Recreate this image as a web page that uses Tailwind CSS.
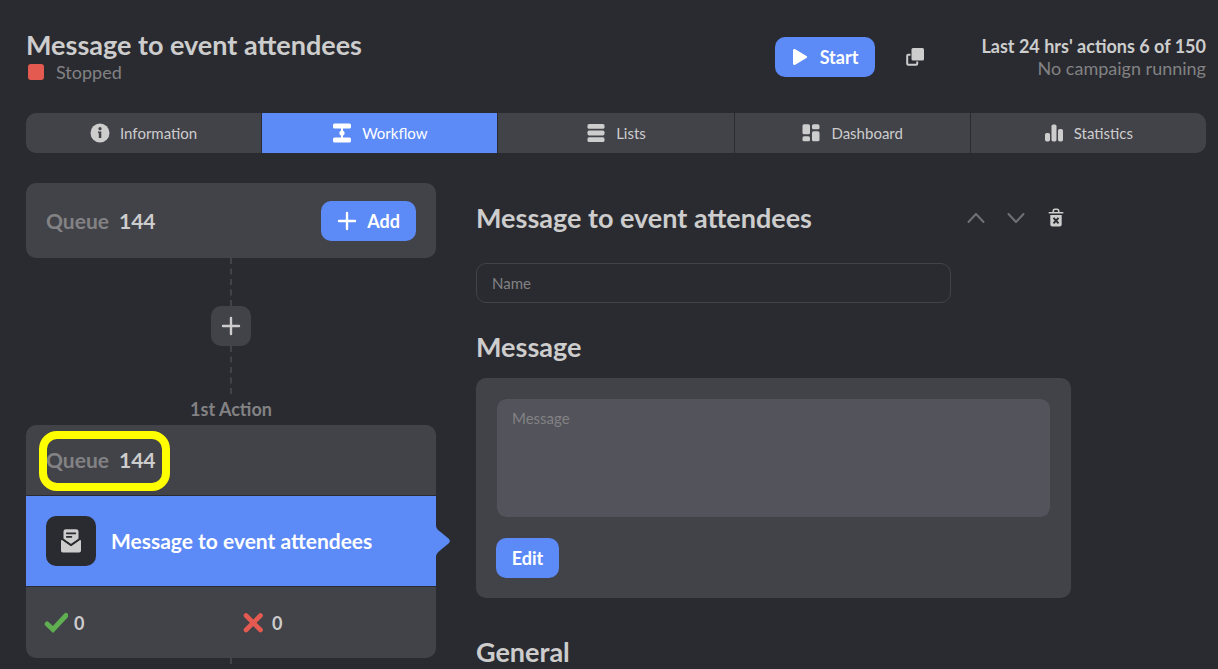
<!DOCTYPE html>
<html lang="en">
<head>
  <meta charset="UTF-8" />
  <meta name="viewport" content="width=device-width, initial-scale=1.0"/>
  <title>Message to event attendees</title>
  <script src="https://cdn.jsdelivr.net/npm/@tailwindcss/browser@4"></script>
</head>
<body class="bg-[#2a2b30] text-[#cdcdcd] font-['Lato',sans-serif] min-h-screen pl-[26px] pr-3 pt-[30px]">

  <!-- Campaign header -->
  <header class="flex items-center">
    <div class="flex-1">
      <h1 class="text-[27px] leading-[30px] font-bold">Message to event attendees</h1>
      <p class="flex items-center gap-3 pl-0.5 text-lg leading-6 text-[#828284]">
        <span class="w-4 h-4 rounded-[3px] bg-[#e55a50]"></span>
        Stopped
      </p>
    </div>
    <button class="flex items-center justify-center gap-3 w-[100px] h-10 rounded-[10px] bg-[#5c8af7] text-white text-lg font-bold">
      <svg class="w-4 h-4" viewBox="0 0 16 16" fill="currentColor"><path d="M1 1.6C1 .4 2.200-.3 3.200.3L14.500 7c.9.5.9 1.500 0 2L3.200 15.700C2.200 16.300 1 15.600 1 14.400z"/></svg>
      Start
    </button>
    <button aria-label="Duplicate" class="flex items-center justify-center w-10 h-10 ml-5 mr-10">
      <svg class="w-[18px] h-[18px]" viewBox="0 0 18 18"><path d="M4.500 6.800H2.200a1 1 0 0 0-1 1V15.800a1 1 0 0 0 1 1H10.200a1 1 0 0 0 1-1V13.500" fill="none" stroke="currentColor" stroke-width="2"/><rect x="5.500" y="0" width="12.500" height="12.500" rx="1.500" fill="currentColor"/></svg>
    </button>
    <div class="w-[231px] text-right text-lg leading-[22px] whitespace-nowrap">
      <p class="font-bold">Last 24 hrs' actions 6 of 150</p>
      <p class="text-[#828284]">No campaign running</p>
    </div>
  </header>

  <!-- Tabs -->
  <nav class="mt-[29px] grid grid-cols-5 gap-px h-10 rounded-[10px] overflow-hidden text-[15px]">
    <a href="#information" class="flex items-center justify-center gap-2.5 bg-[#424249]">
      <svg class="w-5 h-5" viewBox="0 0 20 20"><circle cx="10" cy="10" r="9.500" fill="currentColor"/><circle cx="10" cy="5.700" r="1.600" fill="#424249"/><path d="M8 8.500h3.300V15H8.800V10H8z" fill="#424249"/></svg>
      Information
    </a>
    <a href="#workflow" class="flex items-center justify-center gap-2.5 bg-[#5c8af7] text-white">
      <svg class="w-5 h-5" viewBox="0 0 20 20" fill="currentColor"><rect x="1" y="0.500" width="18" height="5" rx="1.600"/><rect x="1" y="14.500" width="18" height="5" rx="1.600"/><rect x="9" y="4" width="2" height="12"/><circle cx="10" cy="10" r="2.600"/></svg>
      Workflow
    </a>
    <a href="#lists" class="flex items-center justify-center gap-2.5 bg-[#424249]">
      <svg class="w-5 h-5" viewBox="0 0 20 20" fill="currentColor"><rect x="1.500" y="1" width="17" height="4.800" rx="1.600"/><rect x="1.500" y="7.600" width="17" height="4.800" rx="1.600"/><rect x="1.500" y="14.200" width="17" height="4.800" rx="1.600"/></svg>
      Lists
    </a>
    <a href="#dashboard" class="flex items-center justify-center gap-2.5 bg-[#424249]">
      <svg class="w-5 h-5" viewBox="0 0 20 20" fill="currentColor"><rect x="1.500" y="1.300" width="7.500" height="10" rx="1.600"/><rect x="1.500" y="13.300" width="7.500" height="5" rx="1.600"/><rect x="11" y="1.300" width="7.500" height="5" rx="1.600"/><rect x="11" y="8.300" width="7.500" height="10" rx="1.600"/></svg>
      Dashboard
    </a>
    <a href="#statistics" class="flex items-center justify-center gap-2.5 bg-[#424249]">
      <svg class="w-5 h-5" viewBox="0 0 20 20" fill="currentColor"><rect x="1" y="10" width="5" height="8.500" rx="1.700"/><rect x="7.500" y="1.500" width="5" height="17" rx="1.700"/><rect x="14" y="6" width="5" height="12.500" rx="1.700"/></svg>
      Statistics
    </a>
  </nav>

  <main class="mt-[30px] flex items-start gap-10">

    <!-- Workflow column -->
    <section class="w-[410px] shrink-0 flex flex-col items-center">
      <div class="w-full h-[75px] rounded-[10px] bg-[#424249] px-5 flex items-center justify-between">
        <p class="flex gap-2.5 text-[21px] leading-7 font-bold"><span class="text-[#828284]">Queue</span>144</p>
        <button class="flex items-center justify-center gap-2.5 w-[95px] h-10 rounded-[10px] bg-[#5c8af7] text-white text-lg font-bold">
          <svg class="w-5 h-5" viewBox="0 0 20 20"><path d="M10 2v16M2 10h16" stroke="currentColor" stroke-width="2.400" stroke-linecap="round"/></svg>
          Add
        </button>
      </div>

      <div class="h-12 border-l-2 border-dashed border-[#424249]"></div>
      <button aria-label="Add action" class="flex items-center justify-center w-10 h-10 rounded-[10px] bg-[#424249]">
        <svg class="w-5 h-5" viewBox="0 0 20 20"><path d="M10 2v16M2 10h16" stroke="currentColor" stroke-width="2.400" stroke-linecap="round"/></svg>
      </button>
      <div class="h-12 border-l-2 border-dashed border-[#424249]"></div>
      <p class="h-[31px] leading-[30px] text-lg font-bold text-[#828284]">1st Action</p>

      <div class="w-full flex flex-col gap-px">
        <div class="relative h-[70px] rounded-t-[10px] bg-[#424249] px-5 flex items-center">
          <p class="flex gap-2.5 text-[21px] leading-7 font-bold"><span class="text-[#828284]">Queue</span>144</p>
          <!-- highlight ring -->
          <div class="absolute left-[13px] top-1.5 w-[131px] h-[60px] rounded-[18px] border-8 border-[#ffff00]"></div>
        </div>
        <div class="relative h-[90px] bg-[#5c8af7] px-5 flex items-center gap-[15px] text-white">
          <div class="w-[50px] h-[50px] rounded-[10px] bg-[#2a2b30] flex items-center justify-center text-[#cdcdcd]">
            <svg class="w-6 h-6" viewBox="0 0 24 24"><path d="M4.500 9.800V2.600A2.400 2.400 0 0 1 6.900.2H17.100A2.400 2.400 0 0 1 19.500 2.600V9.800L12 15z" fill="currentColor"/><path d="M7.800 4.300h8.600M7.800 7.900h4.600" stroke="#2a2b30" stroke-width="1.700" stroke-linecap="round"/><path d="M2 12.300C2 11 3 10.800 3.800 11.400L12 17.300 20.200 11.400C21 10.800 22 11 22 12.300V21.700A1.800 1.800 0 0 1 20.200 23.500H3.800A1.800 1.800 0 0 1 2 21.700z" fill="currentColor"/><path d="M3 9.800L12 16.200 21 9.800" fill="none" stroke="#2a2b30" stroke-width="1.500"/></svg>
          </div>
          <p class="text-[21px] leading-7 font-bold">Message to event attendees</p>
          <svg class="absolute left-full top-[30px] w-3.5 h-[30px] text-[#5c8af7]" viewBox="0 0 14 30" fill="currentColor"><path d="M0 0C.5 2.500 2 4 4 5.600L12.500 12.500C14.300 14 14.300 16 12.500 17.500L4 24.400C2 26 .5 27.500 0 30z"/></svg>
        </div>
        <div class="h-[71px] rounded-b-[10px] bg-[#424249] pl-[18px] flex items-center text-lg font-bold">
          <p class="w-[198px] flex items-center gap-1.5">
            <svg class="w-6 h-6" viewBox="0 0 24 24"><path d="M3.200 13L9 18.500 22 4.500" fill="none" stroke="#5fae50" stroke-width="5" stroke-linecap="round" stroke-linejoin="miter"/></svg>
            0
          </p>
          <p class="flex items-center gap-2">
            <svg class="w-[22px] h-6" viewBox="0 0 22 24"><path d="M4 4.500l14.500 14.500M18.500 4.500L4 19" stroke="#e55a50" stroke-width="4.600" stroke-linecap="round"/></svg>
            0
          </p>
        </div>
      </div>
      <div class="h-1.5 border-l-2 border-dashed border-[#424249]"></div>
    </section>

    <!-- Action settings -->
    <section class="flex-1 max-w-[595px] pt-[15px]">
      <div class="h-10 flex items-center gap-2.5">
        <h2 class="flex-1 text-[27px] leading-[38px] font-bold">Message to event attendees</h2>
        <button aria-label="Move up" class="w-[30px] h-[30px] flex items-center justify-center text-[#707075]">
          <svg class="w-5 h-5" viewBox="0 0 20 20" fill="none" stroke="currentColor" stroke-width="2" stroke-linecap="round" stroke-linejoin="round"><path d="M2.500 14L10 6l7.500 8"/></svg>
        </button>
        <button aria-label="Move down" class="w-[30px] h-[30px] flex items-center justify-center text-[#707075]">
          <svg class="w-5 h-5" viewBox="0 0 20 20" fill="none" stroke="currentColor" stroke-width="2" stroke-linecap="round" stroke-linejoin="round"><path d="M2.500 6L10 14l7.500-8"/></svg>
        </button>
        <button aria-label="Delete" class="w-[30px] h-[30px] flex items-center justify-center">
          <svg class="w-5 h-5" viewBox="0 0 20 20"><path d="M7.300 4V2.800A1.500 1.500 0 0 1 8.800 1.300H11.200A1.500 1.500 0 0 1 12.700 2.800V4M2.700 4.800H17.300" fill="none" stroke="currentColor" stroke-width="1.600"/><path d="M4.300 7H15.700V16.500A2 2 0 0 1 13.700 18.500H6.300A2 2 0 0 1 4.300 16.500z" fill="currentColor"/><path d="M7.500 9.800l5 5.500M12.500 9.800l-5 5.500" stroke="#2a2b30" stroke-width="2"/></svg>
        </button>
      </div>

      <input type="text" aria-label="Name" placeholder="Name" class="mt-[25px] block w-full max-w-[475px] h-10 px-[15px] rounded-[10px] border border-[#424249] text-[15px] placeholder:text-[#828284]" />

      <h2 class="mt-[25px] text-[27px] leading-[38px] font-bold">Message</h2>
      <div class="mt-3 rounded-[10px] bg-[#424249] p-5">
        <textarea aria-label="Message" placeholder="Message" class="block w-full h-[120px] px-[15px] py-2 rounded-[10px] border border-[#424249] bg-[#53535b] bg-clip-padding resize-none text-[15px] leading-[22px] placeholder:text-[#828284]"></textarea>
        <button class="mt-5 w-[63px] h-10 rounded-[10px] bg-[#5c8af7] text-white text-lg font-bold">Edit</button>
      </div>

      <h2 class="mt-[35px] text-[27px] leading-[38px] font-bold">General</h2>
    </section>
  </main>
</body>
</html>
